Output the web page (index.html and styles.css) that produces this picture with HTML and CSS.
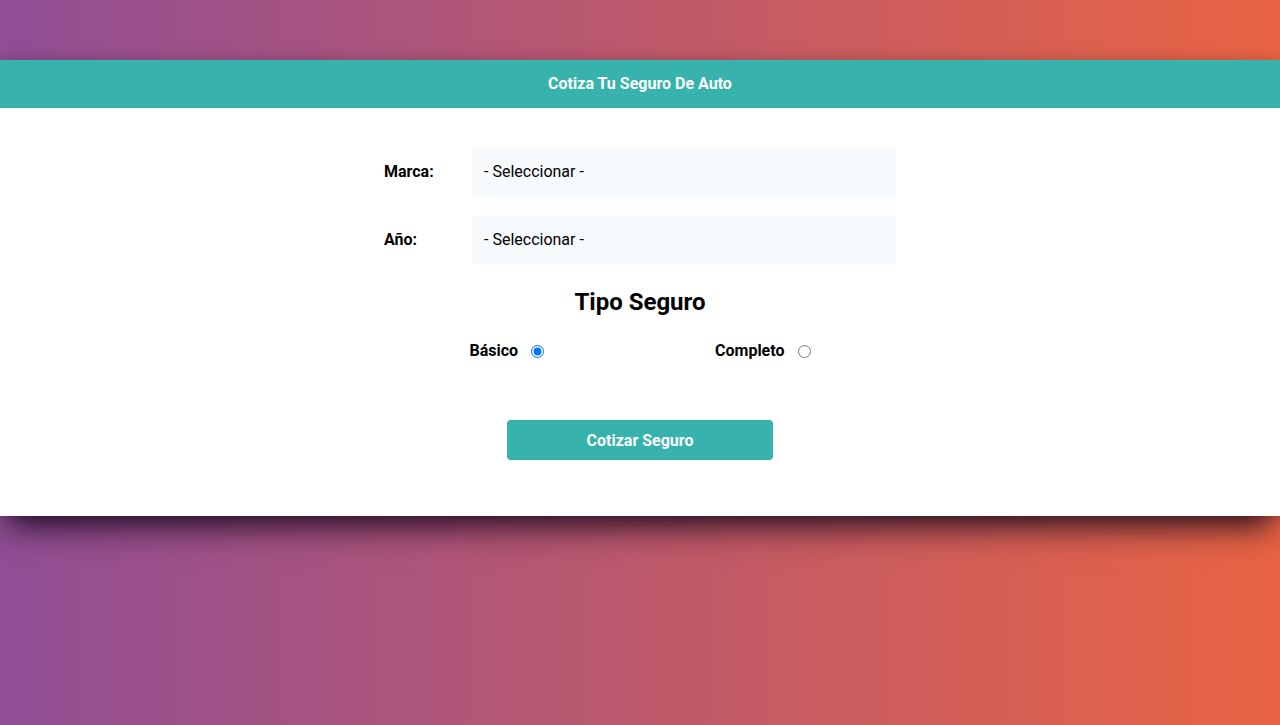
FILE: index.html
```html
<!DOCTYPE html>
<html lang="es">
<head>
<meta charset="utf-8">
<title>Cotizador</title>
<link rel="stylesheet" href="styles.css">
</head>
<body>
<div class="card">
  <header class="header"><h1>Cotiza Tu Seguro De Auto</h1></header>
  <form class="form">
    <div class="row">
      <label class="label">Marca:</label>
      <div class="select">- Seleccionar -</div>
    </div>
    <div class="row">
      <label class="label">Año:</label>
      <div class="select">- Seleccionar -</div>
    </div>
    <h2 class="subtitle">Tipo Seguro</h2>
    <div class="radios">
      <label class="radio-item">Básico <input type="radio" name="plan" value="basico" checked></label>
      <label class="radio-item">Completo <input type="radio" name="plan" value="completo"></label>
    </div>
    <div class="actions">
      <button type="button" class="btn">Cotizar Seguro</button>
    </div>
  </form>
</div>
</body>
</html>
```
FILE: styles.css
```css
* { box-sizing: border-box; }
html, body { margin: 0; height: 100%; }
body {
  font-family: Roboto, "Noto Sans", sans-serif;
  background: linear-gradient(to right, #904e95, #e96443);
  padding-top: 60px;
  color: #000;
}
.card {
  background: #fff;
  box-shadow: 0 18px 30px -8px rgba(20, 5, 25, 0.9), 0 0 12px rgba(20, 5, 25, 0.15);
  padding-bottom: 56px;
}
.header {
  background: #38b2ac;
  height: 48px;
  display: flex;
  align-items: center;
  justify-content: center;
  padding-bottom: 1px;
}
.header h1 {
  margin: 0;
  color: #fff;
  font-size: 16px;
  font-weight: 700;
}
.form {
  width: 512px;
  margin: 0 auto;
  padding-top: 40px;
}
.row {
  display: flex;
  align-items: center;
  margin-bottom: 20px;
}
.label {
  width: 88px;
  font-weight: 700;
  font-size: 16px;
  padding-bottom: 1px;
}
.select {
  flex: 1;
  height: 48px;
  background: #f7fafc;
  padding: 0 12px 1px;
  display: flex;
  align-items: center;
  font-size: 16px;
}
.subtitle {
  text-align: center;
  font-size: 24px;
  font-weight: 700;
  margin: 22px 0 0;
  line-height: 32px;
}
.radios {
  display: flex;
  justify-content: space-around;
  margin-top: 21px;
  line-height: 24px;
}
.radio-item {
  font-weight: 700;
  font-size: 16px;
  display: flex;
  align-items: center;
}
.radio-item input {
  margin: 0 0 0 13px;
  width: 13px;
  height: 13px;
}
.actions {
  display: flex;
  justify-content: center;
  margin-top: 57px;
}
.btn {
  width: 266px;
  height: 40px;
  background: #38b2ac;
  color: #fff;
  font-family: Roboto, "Noto Sans", sans-serif;
  font-weight: 700;
  font-size: 16px;
  border: 0;
  border-radius: 4px;
}
```
